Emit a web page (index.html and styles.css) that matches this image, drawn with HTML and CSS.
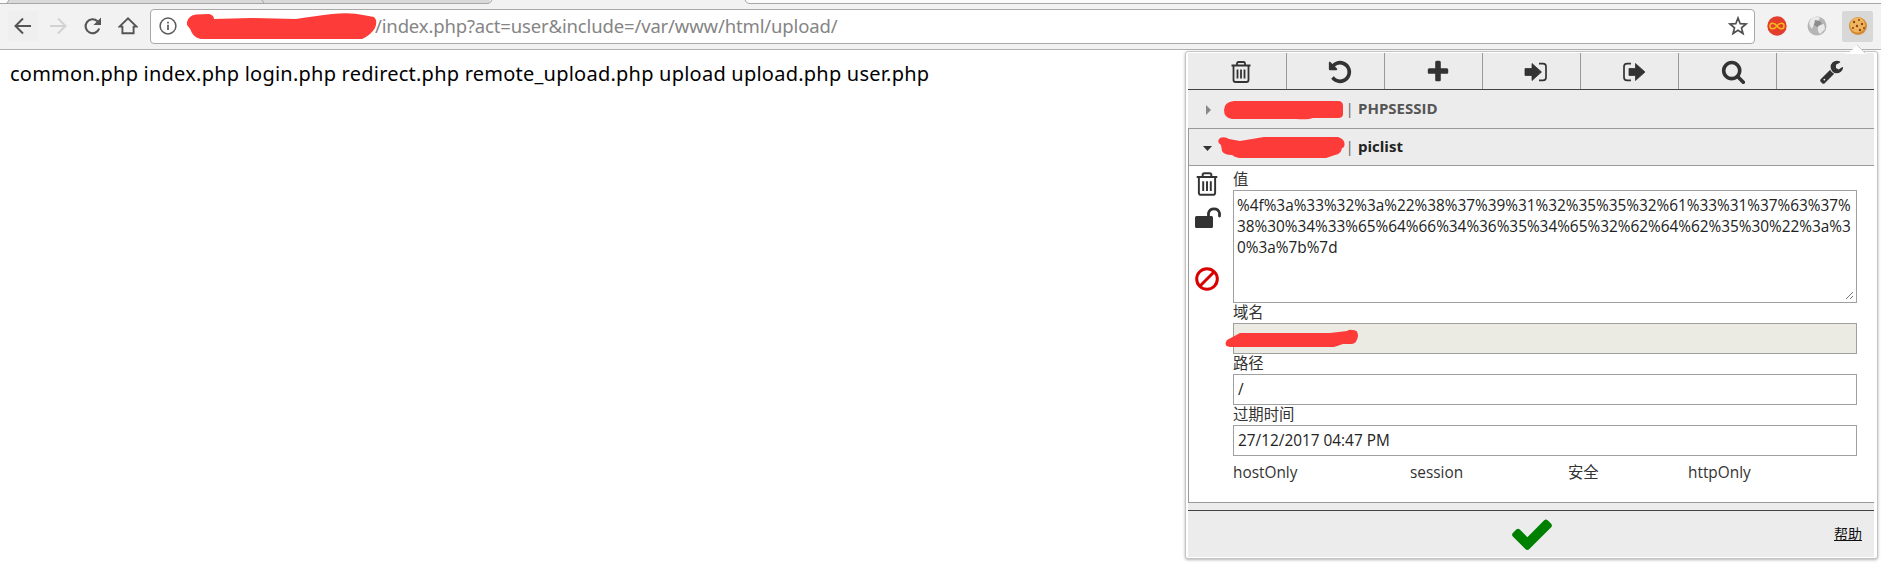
FILE: index.html
```html
<!DOCTYPE html>
<html lang="zh-CN">
<head>
<meta charset="utf-8">
<title>upload</title>
<link rel="stylesheet" href="styles.css">
</head>
<body>
<header class="browser">
  <svg class="tabs" width="1881" height="4" viewBox="0 0 1881 4">
    <path d="M0 0H1881V4H0z" fill="#fbfbfb"/>
    <path d="M9 0H490.500L489 3H7z" fill="#d9d9d9"/>
    <path d="M491 0H745L748 4H489z" fill="#f2f2f2"/>
    <path d="M0 3.500H488Q491 3 492 0M745 0Q746 3 749 3.500H1881M9 0L7 3M262 0L264 3" fill="none" stroke="#a6a6a6"/>
  </svg>
  <div class="toolbar">
    <nav class="nav">
      <span class="nav-btn back"><svg width="20" height="20" viewBox="0 0 20 20"><path d="M18 10H3M10 2.500L2.500 10L10 17.500" fill="none" stroke="#555" stroke-width="2"/></svg></span>
      <span class="nav-btn"><svg width="20" height="20" viewBox="0 0 20 20"><path d="M2 10H17M10 2.500L17.500 10L10 17.500" fill="none" stroke="#d2d2d2" stroke-width="2"/></svg></span>
      <span class="nav-btn"><svg width="20" height="20" viewBox="0 0 20 20"><path d="M16.200 12.500A7 7 0 1 1 14.500 5.200" fill="none" stroke="#555" stroke-width="2.100"/><path d="M18 1.500V9H10.500z" fill="#555"/></svg></span>
      <span class="nav-btn"><svg width="20" height="20" viewBox="0 0 20 20"><path d="M1.500 10.600L10 2.400L18.500 10.600H15.600V17.200H4.400V10.600z" fill="none" stroke="#555" stroke-width="1.900"/></svg></span>
    </nav>
    <div class="address">
      <svg class="info" width="18" height="18" viewBox="0 0 18 18"><circle cx="9" cy="9" r="7.900" fill="none" stroke="#5a5a5a" stroke-width="1.500"/><path d="M9 7.800V13M9 4.700V6.500" stroke="#5a5a5a" stroke-width="1.700"/></svg>
      <svg class="url-mark" width="192" height="28" viewBox="0 0 192 28"><path d="M1 9Q3 2 10 1.500L23 1Q28 2 28 6L65 5L110 6Q130 3 146 1Q165-1 177 2L188 4Q192 8 189 15Q185 22 176 26H15Q9 25 6 20Q4 15 1 12z" fill="#fd3b39"/></svg>
      <span class="url">/index.php?act=user&amp;include=/var/www/html/upload/</span>
      <svg class="star" width="20" height="20" viewBox="0 0 20 20"><path d="M10 2L12.200 7.700L18 8L13.500 11.800L15 17.500L10 14.300L5 17.500L6.500 11.800L2 8L7.800 7.700z" fill="none" stroke="#505050" stroke-width="1.700"/></svg>
    </div>
    <div class="extensions">
      <svg width="20" height="20" viewBox="0 0 20 20"><circle cx="10" cy="10" r="9.700" fill="#e33d2e"/><path d="M10 10C7.500 6.500 3 6 3 10S7.500 13.500 10 10S17 6 17 10S12.500 13.500 10 10z" fill="none" stroke="#f7b718" stroke-width="1.600"/></svg>
      <svg width="20" height="20" viewBox="0 0 20 20"><circle cx="10" cy="10" r="9.500" fill="#b5b5b5"/><path d="M4 3Q8-1 13 2L11 6L7 8L5 13Q0 8 4 3M12 9L17 8L18 13L13 18Q9 14 12 9" fill="#e9e9e9"/><path d="M8 4L13 5L15 8L10 11L7 9z" fill="#8d8d8d"/></svg>
      <span class="ext-active"><svg width="20" height="20" viewBox="0 0 20 20"><circle cx="10" cy="10" r="9" fill="#d58a35"/><circle cx="9.500" cy="9" r="7.500" fill="#f0b55c"/><g fill="#8b4519"><circle cx="6" cy="6" r="1.200"/><circle cx="11" cy="4" r="1"/><circle cx="14" cy="8" r="1.200"/><circle cx="9" cy="10" r="1.200"/><circle cx="5" cy="12" r="1"/><circle cx="12" cy="14" r="1.200"/><circle cx="16" cy="12" r="1"/></g></svg></span>
    </div>
  </div>
</header>
<main class="listing"><span class="files">common.php index.php login.php redirect.php remote_upload.php upload upload.php user.php</span></main>

<section class="popup">
  <svg class="pointer" width="26" height="10" viewBox="0 0 26 10"><path d="M0 10Q6 9 9 6L14 1L23 10z" fill="#fff"/><path d="M14 1L22 9" stroke="#c9c9c9" fill="none"/></svg>
  <div class="actions">
    <span class="action"><svg width="24" height="24" viewBox="0 0 24 24"><use href="#trash"/></svg></span>
    <span class="action"><svg width="26" height="26" viewBox="0 0 1792 1792"><path d="M1664 896q0 156-61 298t-164 245-245 164-298 61q-172 0-327-72.500t-264-204.500q-7-10-6.500-22.500t8.500-20.500l137-138q10-9 25-9 16 2 23 12 73 95 179 147t225 52q104 0 198.500-40.500t163.500-109.500 109.500-163.500 40.500-198.500-40.500-198.500-109.500-163.500-163.500-109.500-198.500-40.500q-98 0-188 35.500t-160 101.500l137 138q31 30 14 69-17 40-59 40h-448q-26 0-45-19t-19-45v-448q0-42 40-59 39-17 69 14l130 129q107-101 244.500-156.500t284.500-55.500q156 0 298 61t245 164 164 245 61 298z"/></svg></span>
    <span class="action"><svg width="26" height="26" viewBox="0 0 1792 1792"><path d="M1600 736v192q0 40-28 68t-68 28h-416v416q0 40-28 68t-68 28h-192q-40 0-68-28t-28-68v-416h-416q-40 0-68-28t-28-68v-192q0-40 28-68t68-28h416v-416q0-40 28-68t68-28h192q40 0 68 28t28 68v416h416q40 0 68 28t28 68z"/></svg></span>
    <span class="action"><svg width="24" height="24" viewBox="0 0 24 24"><path d="M1 8.500H8V3.500L17.500 12L8 20.500V15.500H1z" stroke="#333" stroke-width=".8" stroke-linejoin="round"/><path d="M15 3.700H19Q22 3.700 22 6.500V17.500Q22 20.300 19 20.300H15" fill="none" stroke="#333" stroke-width="1.700"/></svg></span>
    <span class="action"><svg width="24" height="24" viewBox="0 0 24 24"><path d="M7 8.500H13.500V3.500L23 12L13.500 20.500V15.500H7z" stroke="#333" stroke-width=".8" stroke-linejoin="round"/><path d="M9 3.700H5Q2 3.700 2 6.500V17.500Q2 20.300 5 20.300H9" fill="none" stroke="#333" stroke-width="1.700"/></svg></span>
    <span class="action wide"><svg width="25" height="25" viewBox="0 0 1792 1792"><path d="M1216 832q0-185-131.500-316.500t-316.500-131.500-316.500 131.500-131.500 316.500 131.500 316.500 316.500 131.500 316.500-131.500 131.500-316.500zm512 832q0 52-38 90t-90 38q-54 0-90-38l-343-342q-179 124-399 124-143 0-273.500-55.500t-225-150-150-225-55.500-273.500 55.500-273.500 150-225 225-150 273.500-55.500 273.500 55.500 225 150 150 225 55.500 273.500q0 220-124 399l343 343q37 37 37 90z"/></svg></span>
    <span class="action wide"><svg width="25" height="25" viewBox="0 0 1792 1792"><path d="M448 1472q0-26-19-45t-45-19-45 19-19 45 19 45 45 19 45-19 19-45zm644-420l-682 682q-37 37-90 37-52 0-91-37l-106-108q-38-36-38-90 0-53 38-91l681-681q39 98 114.500 173.500t173.500 114.500zm634-435q0 39-23 106-47 134-164.500 217.500t-258.500 83.500q-185 0-316.500-131.500t-131.500-316.500 131.500-316.500 316.500-131.500q58 0 121.500 16.500t107.500 46.500q16 11 16 28t-16 28l-293 169v224l193 107q5-3 79-48.500t135.500-81 70.500-35.500q15 0 23.500 10t8.500 25z"/></svg></span>
  </div>

  <div class="cookie">
    <svg class="caret" width="10" height="10" viewBox="0 0 10 10"><path d="M3 0L8 5L3 10z" fill="#888"/></svg>
    <svg class="host-mark" width="129" height="24" viewBox="0 0 129 24"><path d="M18 3H122Q127 3 127 8V16Q127 20 122 20H97Q92 22 80 21H16Q8 20 8 12Q8 4 18 3z" fill="#fd3b39"/></svg>
    <span class="bar">|</span><b>PHPSESSID</b>
  </div>
  <div class="cookie open">
    <svg class="caret" width="10" height="10" viewBox="0 0 10 10"><path d="M0 3H9L4.500 8z" fill="#333"/></svg>
    <svg class="host-mark" width="129" height="24" viewBox="0 0 129 24"><path d="M4 2Q9 0 13 3L24 5L48 1H122Q129 3 128.500 9Q128 12 126 12Q125 18 119 19L110 22H23Q18 21 16 19Q8 19 6 15L5 9Q0 6 4 2z" fill="#fd3b39"/></svg>
    <span class="bar">|</span><b>piclist</b>
  </div>

  <div class="details">
    <div class="side">
      <svg width="26" height="26" viewBox="0 0 24 24"><use href="#trash"/></svg>
      <svg class="lock" width="28" height="24" viewBox="0 0 28 24"><rect x="1" y="11" width="18" height="12" rx="1.500"/><path d="M14.500 11V8A5.700 5.700 0 0 1 25.500 8V11" fill="none" stroke="#333" stroke-width="2.800" stroke-linecap="round"/></svg>
      <svg class="ban" width="24" height="24" viewBox="0 0 24 24"><circle cx="12" cy="12" r="10.300" fill="none" stroke="#d90000" stroke-width="3"/><path d="M4.800 19.200L19.200 4.800" stroke="#d90000" stroke-width="3"/></svg>
    </div>
    <div class="fields">
      <div class="label">值</div>
      <div class="field area">%4f%3a%33%32%3a%22%38%37%39%31%32%35%35%32%61%33%31%37%63%37%<br>38%30%34%33%65%64%66%34%36%35%34%65%32%62%64%62%35%30%22%3a%3<br>0%3a%7b%7d
        <svg class="grip" width="9" height="9" viewBox="0 0 9 9"><path d="M1 8L8 1M5 8L8 5" stroke="#777"/></svg>
      </div>
      <div class="label">域名</div>
      <div class="field disabled"><svg class="domain-mark" width="134" height="20" viewBox="0 0 134 20"><path d="M2 11L15 4H105L122 2Q125 0 127 1Q133 0 133 7Q132 14 127 15H118L109 18H5Q-2 17 2 11z" fill="#fd3b39"/></svg></div>
      <div class="label">路径</div>
      <div class="field">/</div>
      <div class="label">过期时间</div>
      <div class="field">27/12/2017 04:47 PM</div>
      <div class="flags"><span>hostOnly</span><span>session</span><span>安全</span><span>httpOnly</span></div>
    </div>
  </div>
  <footer class="foot">
    <svg class="check" width="46" height="46" viewBox="0 0 1792 1792"><path fill="#008000" d="M1671 566q0 40-28 68l-724 724-136 136q-28 28-68 28t-68-28l-136-136-362-362q-28-28-28-68t28-68l136-136q28-28 68-28t68 28l294 295 656-657q28-28 68-28t68 28l136 136q28 28 28 68z"/></svg>
    <a class="help">帮助</a>
  </footer>
</section>
<svg class="defs" width="0" height="0"><defs><g id="trash" fill="none" stroke="#333" stroke-width="1.800"><path d="M2.500 5.500H21.500M8 5V3.500Q8 2 9.500 2H14.500Q16 2 16 3.500V5M4.500 6V20Q4.500 22 6.500 22H17.500Q19.500 22 19.500 20V6M8.500 9.500V18.500M12 9.500V18.500M15.500 9.500V18.500"/></g></defs></svg>
</body>
</html>
```
FILE: styles.css
```css
* { box-sizing: border-box; }
body {
  margin: 0;
  height: 574px;
  overflow: hidden;
  position: relative;
  background: #fff;
  font-family: "Open Sans", "Noto Sans CJK SC", sans-serif;
}
svg { display: block; flex: none; }
.defs { position: absolute; }
.toolbar {
  display: flex;
  align-items: center;
  height: 46px;
  padding-bottom: 1px;
  background: #f2f2f2;
  border-bottom: 1px solid #b0b0b0;
}
.nav { display: flex; align-items: center; gap: 5px; width: 150px; padding-left: 8px; }
.nav-btn { display: flex; align-items: center; justify-content: center; width: 30px; height: 30px; }
.nav-btn.back { background: #efefef; }
.address {
  display: flex;
  align-items: center;
  width: 1605px;
  height: 35px;
  padding: 0 6px 0 8px;
  background: #fff;
  border: 1px solid #a8a8a8;
  border-radius: 4px;
}
.url-mark { margin: 1px 0 0 9px; }
.url { margin-left: -3px; color: #858585; font: 18.5px/32px "Noto Sans", sans-serif; letter-spacing: -.15px; white-space: nowrap; }
.star { margin-left: auto; }
.extensions { display: flex; align-items: center; gap: 20px; padding-left: 12px; }
.ext-active { display: flex; align-items: center; justify-content: center; width: 31px; height: 31px; margin-left: -5px; background: #d8d8d8; border-radius: 2px; }
.listing { padding: 8px 10px; font: 20px/32px "Noto Sans", sans-serif; letter-spacing: .23px; color: #000; white-space: nowrap; }

.popup {
  position: absolute;
  left: 1185px;
  top: 51px;
  width: 693px;
  height: 508px;
  padding: 1px 2px 0 2px;
  background: #fff;
  border: 1px solid #c4c4c4;
  border-radius: 3px;
  box-shadow: 0 1px 3px rgba(0, 0, 0, .3);
}
.pointer { position: absolute; right: 8px; top: -8px; }
.actions { display: grid; grid-template-columns: 99px repeat(5, 98px) 1fr; height: 37px; width: 686px; background: #ececec; border-bottom: 1px solid #444; }
.action { display: flex; align-items: center; justify-content: center; border-right: 1px solid #999; fill: #333; padding: 2px 0 0 8px; }
.action.wide { padding: 1px 0 0 11px; }
.action:last-child { border-right: 0; }
.cookie { display: flex; align-items: center; width: 686px; height: 39px; padding: 1px 0 0 15px; background: #ececec; border-bottom: 1px solid #999; color: #555; font-size: 15px; line-height: 20px; }
.cookie.open { height: 37px; padding-left: 14px; border-left: 1px solid #999; color: #222; }
.host-mark { margin-left: 3px; }
.cookie .bar { width: 9px; margin: -3px 4px 0 0; color: #666; text-align: center; }
.cookie b { margin-top: -3px; font-weight: 700; }
.details { display: flex; width: 686px; height: 337px; border-left: 1px solid #999; border-bottom: 1px solid #999; }
.side { width: 44px; padding: 5px 0 0 5px; fill: #333; }
.lock { margin-top: 8px; }
.ban { margin: 38px 0 0 1px; }
.fields { width: 624px; padding-top: 4px; color: #333; font-size: 15.36px; }
.label { height: 20px; line-height: 20px; }
.field { height: 31px; padding: 0 4px; border: 1px solid #a0a0a0; line-height: 30px; color: #222; white-space: nowrap; }
.field.area { position: relative; height: 113px; padding: 4px 3px 0; line-height: 21px; }
.grip { position: absolute; right: 2px; bottom: 2px; }
.field.disabled { background: #ebebe4; }
.domain-mark { margin: 5px 0 0 -13px; }
.flags { display: grid; grid-template-columns: 177px 158px 120px 1fr; padding-top: 7px; line-height: 20px; }
.foot { display: flex; align-items: center; width: 686px; height: 54px; padding: 7px 12px 0 321px; background: linear-gradient(#ececec 7px, #444 7px, #444 8px, #ececec 8px); }
.help { margin-left: auto; color: #111; font-size: 14px; line-height: 20px; text-decoration: underline; }
```
